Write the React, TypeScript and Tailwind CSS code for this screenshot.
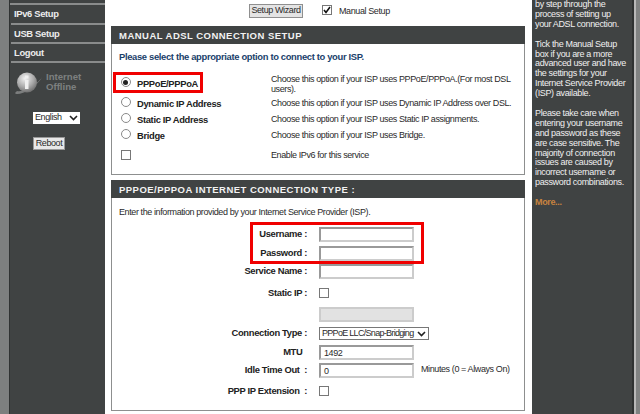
const font = "font-['Liberation_Sans',sans-serif]";
const body = 'text-[9px] tracking-[-0.4px] text-[#2a2a2a]';
const strong = 'text-[9.4px] tracking-[-0.33px] font-bold';
const panelHead = 'text-[9.5px] leading-[20px] font-bold tracking-[0.47px] text-[#f2f2f2]';

function MenuItem({ label, h }: { label: string; h: string }) {
  return (
    <div className={`${h} border-b-2 border-[#8a8c8c] pl-[3px] ${strong} leading-[17px] text-[#ececec]`}>
      {label}
    </div>
  );
}

function Radio({ checked }: { checked?: boolean }) {
  return (
    <span className="flex h-[10px] w-[10px] items-center justify-center rounded-full border border-[#8a8a8a] bg-white">
      {checked && <span className="h-[5px] w-[5px] rounded-full bg-[#222]" />}
    </span>
  );
}

function Box() {
  return <span className="block h-[10px] w-[10px] border border-[#777] bg-white" />;
}

function OptionRow({ label, desc, h, descClass, radio, checked }: { label: string; desc: string; h: string; descClass: string; radio?: boolean; checked?: boolean }) {
  return (
    <div className={`flex ${h}`}>
      <div className="flex w-[25px] justify-center pl-[2px]">{radio ? <Radio checked={checked} /> : <Box />}</div>
      <div className={`w-[134px] pt-[1px] ${strong} leading-[12px] text-[#222]`}>{label}</div>
      <div className={`w-[245px] ${body} leading-[10px] ${descClass}`}>{desc}</div>
    </div>
  );
}

function Field({ label, h, children }: { label: string; h: string; children?: React.ReactNode }) {
  return (
    <div className={`flex items-center ${h}`}>
      <div className={`w-[195px] text-right ${strong} whitespace-nowrap text-[#222]`}>{label}</div>
      <div className="ml-[12px] flex items-center">{children}</div>
    </div>
  );
}

function TextBox({ value, disabled }: { value?: string; disabled?: boolean }) {
  return (
    <div className={`h-[15px] w-[95px] border-2 pl-[3px] ${body} leading-[12px] ${disabled ? 'border-[#ccc] bg-[#e2e2e2]' : 'border-t-[#999] border-r-[#ccc] border-b-[#ccc] border-l-[#999] bg-white'}`}>
      {value}
    </div>
  );
}

export default function App() {
  return (
    <div className={`flex h-[414px] w-[640px] overflow-hidden bg-white ${font}`}>
      <div className="w-[9px] bg-[#7d7f7f]" />

      {/* left menu */}
      <div className="w-[96px] border-l border-[#2f3232] bg-[#404343] pt-[3px]">
        <div className="border-t-2 border-[#8a8c8c] pl-px">
          <MenuItem h="h-[20px]" label="IPv6 Setup" />
          <MenuItem h="h-[19px]" label="USB Setup" />
          <MenuItem h="h-[19px]" label="Logout" />
        </div>
        <div className="mt-[9px] flex items-start pl-[4px]">
          <svg width="30" height="24" viewBox="0 0 30 24">
            <defs>
              <radialGradient id="ball" cx="0.4" cy="0.3" r="0.8">
                <stop offset="0" stopColor="#f2f2f2" />
                <stop offset="0.55" stopColor="#a8a8a8" />
                <stop offset="1" stopColor="#5c5c5c" />
              </radialGradient>
            </defs>
            <path d="M1 21C3 25 22 17 29 4C25 11 10 21 3 19Z" fill="#7c7e7e" />
            <circle cx="13" cy="10.5" r="10" fill="url(#ball)" />
            <rect x="11" y="8" width="3.5" height="9" fill="#f0f0f0" />
            <rect x="11" y="3.5" width="3.5" height="3" fill="#f0f0f0" />
          </svg>
          <div className="ml-[2px] text-[9.6px] leading-[10px] font-bold text-[#7d8080]">
            Internet
            <br />
            Offline
          </div>
        </div>
        <div className={`mt-[16px] ml-[23px] flex h-[12px] w-[47px] items-center justify-between bg-white pr-[2px] pl-[2px] ${body}`}>
          English
          <svg width="9" height="6" viewBox="0 0 9 6"><path d="M1 1l3.5 3.5L8 1" fill="none" stroke="#222" strokeWidth="1.6" /></svg>
        </div>
        <div className={`mt-[13px] ml-[23px] flex h-[13px] w-[32px] items-center justify-center border border-[#999] bg-[#e8e8e8] ${body}`}>
          Reboot
        </div>
      </div>

      {/* center */}
      <div className="w-[427px] px-[6px]">
        <div className="flex h-[26px] items-start pt-[4px]">
          <div className={`ml-[138px] flex h-[14px] w-[54px] items-center justify-center border border-[#8f8f8f] bg-[#e4e4e4] whitespace-nowrap ${body}`}>
            Setup Wizard
          </div>
          <span className="mt-[1px] ml-[19px] flex h-[10px] w-[10px] items-center justify-center border border-[#777] bg-white">
            <svg width="8" height="8" viewBox="0 0 8 8"><path d="M1 4l2 2.5L7 1" fill="none" stroke="#111" strokeWidth="1.6" /></svg>
          </span>
          <span className={`ml-[7px] leading-[14px] ${body}`}>Manual Setup</span>
        </div>

        <div className="h-[149px] w-[414px] border-r border-b border-l border-[#8d8f8f]">
          <div className={`-mx-px h-[18px] bg-[#404343] pl-[8px] ${panelHead}`}>
            MANUAL ADSL CONNECTION SETUP
          </div>
          <div className={`pt-[6px] pl-[7px] ${strong} leading-[14px] text-[#1a3f6b]`}>
            Please select the appropriate option to connect to your ISP.
          </div>
          <div className="relative mt-[11px] pt-[2px]">
            <div className="absolute top-[-3px] left-[1px] h-[21px] w-[90px] border-[3px] border-[#f00000]" />
            <OptionRow h="h-[20px]" descClass="-mt-[3px]" radio checked label="PPPoE/PPPoA" desc="Choose this option if your ISP uses PPPoE/PPPoA.(For most DSL users)." />
            <OptionRow h="h-[16px]" descClass="mt-[1px]" radio label="Dynamic IP Address" desc="Choose this option if your ISP uses Dynamic IP Address over DSL." />
            <OptionRow h="h-[16px]" descClass="mt-[1px]" radio label="Static IP Address" desc="Choose this option if your ISP uses Static IP assignments." />
            <OptionRow h="h-[16px]" descClass="mt-[1px]" radio label="Bridge" desc="Choose this option if your ISP uses Bridge." />
            <div className="mt-[5px]">
              <OptionRow h="h-[16px]" descClass="" label="" desc="Enable IPv6 for this service" />
            </div>
          </div>
        </div>

        <div className="mt-[5px] h-[231px] w-[414px] border-r border-b border-l border-[#8d8f8f]">
          <div className={`-mx-px h-[18px] bg-[#404343] pl-[8px] ${panelHead}`}>
            PPPOE/PPPOA INTERNET CONNECTION TYPE :
          </div>
          <div className={`pt-[8px] pl-[7px] ${body} leading-[12px]`}>
            Enter the information provided by your Internet Service Provider (ISP).
          </div>
          <div className="relative mt-[7px]">
            <div className="absolute top-[-3px] left-[138px] h-[42px] w-[174px] border-[3px] border-[#f00000]" />
            <Field label="Username :" h="h-[19px]"><TextBox /></Field>
            <Field label="Password :" h="h-[18px]"><TextBox /></Field>
            <Field label="Service Name :" h="h-[19px]"><TextBox /></Field>
            <Field label="Static IP :" h="h-[24px]"><Box /></Field>
            <Field label="" h="h-[19px]"><TextBox disabled /></Field>
            <Field label="Connection Type :" h="h-[19px]">
              <div className="flex h-[13px] w-[110px] items-center justify-between border border-[#777] bg-white pr-[2px] pl-[2px] text-[9px] tracking-[-0.7px] whitespace-nowrap text-[#2a2a2a]">
                PPPoE LLC/Snap-Bridging
                <svg width="9" height="6" viewBox="0 0 9 6"><path d="M1 1l3.5 3.5L8 1" fill="none" stroke="#222" strokeWidth="1.6" /></svg>
              </div>
            </Field>
            <Field label={'MTU\u00a0\u00a0'} h="h-[18px]"><TextBox value="1492" /></Field>
            <Field label={'Idle Time Out\u00a0\u00a0:'} h="h-[18px]">
              <TextBox value="0" />
              <span className={`ml-[7px] whitespace-nowrap ${body}`}>Minutes (0 = Always On)</span>
            </Field>
            <Field label={'PPP IP Extension\u00a0\u00a0:'} h="h-[24px]"><Box /></Field>
          </div>
        </div>
      </div>

      {/* help */}
      <div className="w-[100px] bg-[#404343] pl-[3px] text-[9px] leading-[9.9px] tracking-[-0.35px] text-[#f0f0f0]">
        <p>by step through the<br />process of setting up<br />your ADSL connection.</p>
        <p className="mt-[9.9px]">Tick the Manual Setup<br />box if you are a more<br />advanced user and have<br />the settings for your<br />Internet Service Provider<br />(ISP) available.</p>
        <p className="mt-[9.9px]">Please take care when<br />entering your username<br />and password as these<br />are case sensitive. The<br />majority of connection<br />issues are caused by<br />incorrect username or<br />password combinations.</p>
        <p className="mt-[9.9px] font-bold text-[#c8843f]">More...</p>
      </div>
      <div className="w-[2px] bg-[#2f3232]" />
      <div className="w-[2px] bg-[#b8b8b8]" />
      <div className="flex-1 bg-[#808282]" />
    </div>
  );
}
